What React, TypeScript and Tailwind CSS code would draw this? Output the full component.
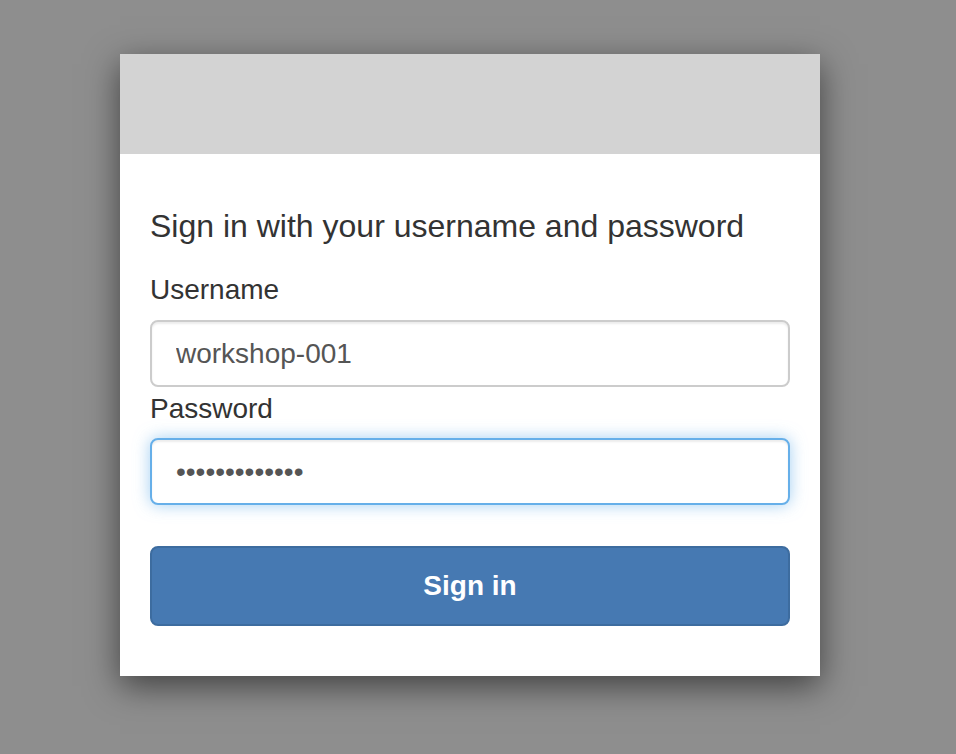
import { useState } from "react";

const font = { fontFamily: '"Liberation Sans", Arial, Helvetica, sans-serif' };

const App = () => {
	const [username, setUsername] = useState("workshop-001");
	const [password, setPassword] = useState("workshop-pass");

	return (
		<main className="min-h-screen w-full bg-[#8e8e8e] pt-[54px] pl-[120px]" style={font}>
			<div className="w-[700px] bg-white shadow-[0_10px_32px_rgba(0,0,0,0.55)]">
				<div className="h-[100px] bg-[#d3d3d3]" />
				<form
					className="flex flex-col px-[30px] pt-[54px] pb-[50px]"
					onSubmit={(e) => e.preventDefault()}
				>
					<h1 className="text-[32px] leading-[36px] text-[#333333]">
						Sign in with your username and password
					</h1>
					<label className="mt-[30px] text-[28px] leading-[32px] text-[#333333]">Username</label>
					<input
						type="text"
						value={username}
						onChange={(e) => setUsername(e.target.value)}
						className="mt-[14px] h-[67px] w-full rounded-[8px] border-2 border-[#cccccc] bg-white px-[24px] text-[28px] text-[#555555] outline-none shadow-[inset_0_2px_2px_rgba(0,0,0,0.075)]"
						style={font}
					/>
					<label className="mt-[6px] text-[28px] leading-[32px] text-[#333333]">Password</label>
					<input
						type="password"
						value={password}
						onChange={(e) => setPassword(e.target.value)}
						className="mt-[13px] h-[67px] w-full rounded-[8px] border-2 border-[#66afe9] bg-white px-[24px] text-[28px] text-[#555555] outline-none shadow-[inset_0_2px_2px_rgba(0,0,0,0.075),0_0_16px_rgba(102,175,233,0.6)]"
						style={font}
					/>
					<button
						type="submit"
						className="mt-[41px] h-[80px] w-full rounded-[8px] border-2 border-[#3d6c9f] bg-[#4679b2] text-[28px] font-bold text-white"
						style={font}
					>
						Sign in
					</button>
				</form>
			</div>
		</main>
	);
};

export default App;
